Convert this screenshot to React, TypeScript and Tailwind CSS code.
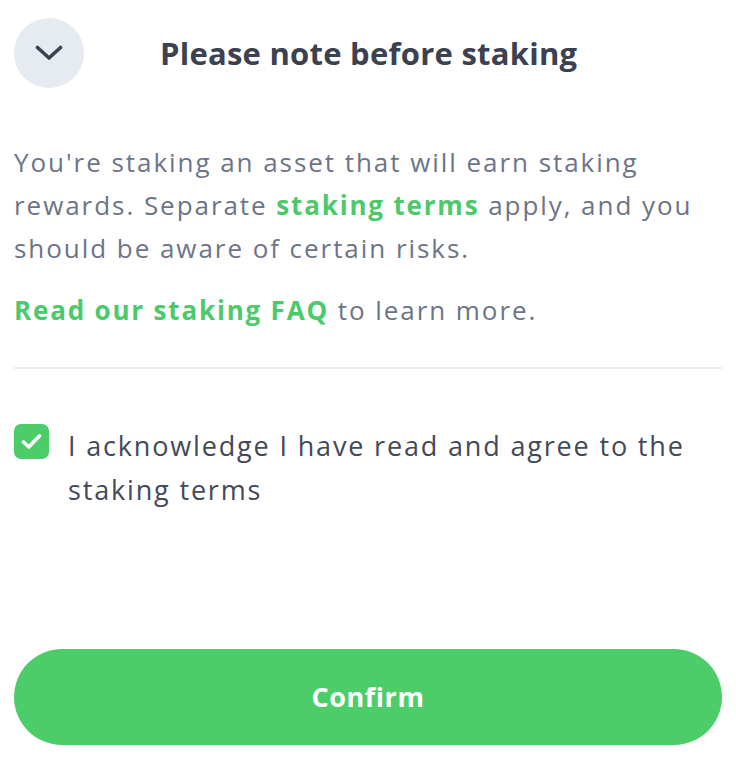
export default function App() {
  return (
    <div className="min-h-[764px] w-[736px] bg-white px-[14px] font-['Open_Sans',sans-serif]">
      <header className="flex h-[106px] items-center">
        <button className="flex size-[70px] shrink-0 items-center justify-center rounded-full bg-[#e6eaf1]">
          <svg width="28" height="16" viewBox="0 0 28 16" fill="none">
            <polyline
              points="2.5,2.5 14,13 25.5,2.5"
              stroke="#3b4150"
              strokeWidth="3.6"
              strokeLinecap="round"
              strokeLinejoin="round"
            />
          </svg>
        </button>
        <h1 className="ml-[76px] text-[31px] font-bold tracking-[0.008em] text-[#3b4150]">
          Please note before staking
        </h1>
      </header>

      <div className="pt-[35px] text-[26px] leading-[43px] tracking-[0.075em] text-[#6d7486]">
        <p>
          You're staking an asset that will earn staking rewards. Separate{" "}
          <a className="font-bold tracking-[0.07em] text-[#4cc96a]">staking terms</a> apply, and you
          should be aware of certain risks.
        </p>
        <p className="mt-[19px]">
          <a className="font-bold tracking-[0.07em] text-[#4cc96a]">Read our staking FAQ</a> to learn
          more.
        </p>
      </div>

      <div className="mt-[35px] h-[2px] bg-[#eceef2]" />

      <label className="mt-[55px] flex items-start gap-[19px]">
        <span className="flex size-[35px] shrink-0 items-center justify-center rounded-[7px] bg-[#4ccd6a]">
          <svg width="21" height="17" viewBox="0 0 21 17" fill="none">
            <polyline
              points="2.5,9 7.8,14 18.5,2.8"
              stroke="white"
              strokeWidth="3.6"
              strokeLinecap="round"
              strokeLinejoin="round"
            />
          </svg>
        </span>
        <span className="text-[27px] leading-[44px] tracking-[0.068em] text-[#434958]">
          I acknowledge I have read and agree to the staking terms
        </span>
      </label>

      <button className="mt-[137px] flex h-[96px] w-full items-center justify-center rounded-full bg-[#4ccd6a] text-[27px] font-bold tracking-[0.02em] text-white">
        Confirm
      </button>
    </div>
  );
}
